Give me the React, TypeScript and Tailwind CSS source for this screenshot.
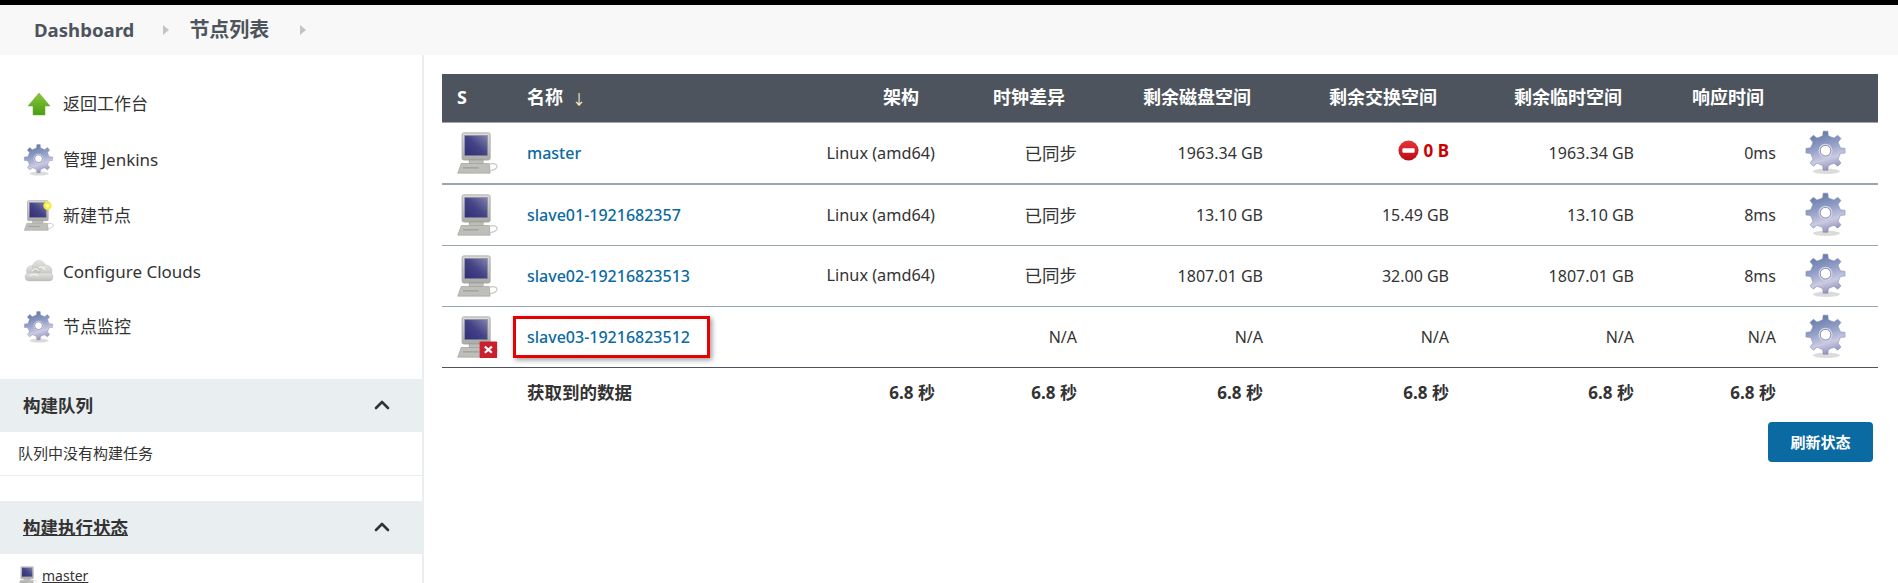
import { ChevronUp } from "lucide-react";

const FONT = {
  fontFamily: '"Noto Sans", "Noto Sans CJK SC", sans-serif',
};

const gearPath = () => {
  const teeth = 8;
  const cx = 24;
  const cy = 24;
  const pts: string[] = [];
  for (let i = 0; i < teeth; i++) {
    const a = (i / teeth) * Math.PI * 2 - Math.PI / 2;
    const step = (Math.PI * 2) / teeth;
    const list: [number, number][] = [
      [a - step * 0.5, 16.5],
      [a - step * 0.24, 17],
      [a - step * 0.15, 22],
      [a + step * 0.15, 22],
      [a + step * 0.24, 17],
    ];
    list.forEach(([t, r]) =>
      pts.push(`${(cx + r * Math.cos(t)).toFixed(2)} ${(cy + r * Math.sin(t)).toFixed(2)}`)
    );
  }
  return `M${pts.join("L")}Z`;
};

const GearIcon = ({ className }: { className: string }) => (
  <svg viewBox="0 0 48 52" className={className}>
    <defs>
      <linearGradient id="gearFill" x1="0.3" y1="0" x2="0.6" y2="1">
        <stop offset="0" stopColor="#5f76a6" />
        <stop offset="0.45" stopColor="#98a4cb" />
        <stop offset="0.72" stopColor="#cbcae2" />
        <stop offset="1" stopColor="#8d8db6" />
      </linearGradient>
    </defs>
    <ellipse cx="25" cy="47" rx="15" ry="3" fill="#000" opacity="0.14" />
    <path
      fillRule="evenodd"
      fill="url(#gearFill)"
      stroke="#8188aa"
      strokeWidth="0.6"
      d={`${gearPath()}M24 18a6 6 0 1 0 0.01 0Z`}
    />
    <circle cx="24" cy="24" r="7" fill="none" stroke="#d6d6e6" strokeWidth="1.6" />
    <circle cx="24" cy="24" r="6" fill="none" stroke="#6a7096" strokeWidth="0.6" />
  </svg>
);

const ComputerIcon = ({
  className,
  offline,
  fresh,
}: {
  className: string;
  offline?: boolean;
  fresh?: boolean;
}) => (
  <svg viewBox="0 0 48 48" className={className}>
    <defs>
      <linearGradient id="screenFill" x1="0" y1="1" x2="1" y2="0">
        <stop offset="0" stopColor="#2f2d78" />
        <stop offset="0.5" stopColor="#444385" />
        <stop offset="0.75" stopColor="#63629a" />
        <stop offset="1" stopColor="#8484ac" />
      </linearGradient>
      <linearGradient id="bodyFill" x1="0" y1="0" x2="0" y2="1">
        <stop offset="0" stopColor="#dcdcda" />
        <stop offset="1" stopColor="#aaaaa6" />
      </linearGradient>
    </defs>
    <rect x="7" y="1" width="32" height="31" rx="2" fill="url(#bodyFill)" stroke="#a2a2a0" />
    <rect x="10" y="4" width="26" height="23" fill="url(#screenFill)" stroke="#85859a" strokeWidth="0.6" />
    <rect x="15" y="32" width="16" height="4" fill="#bdbdb9" stroke="#93938f" strokeWidth="0.6" />
    <path d="M6 36h32l1 11H2z" fill="#bebeba" stroke="#a0a09c" strokeWidth="0.8" />
    <path d="M8 41h18" stroke="#8e8e8a" />
    <path d="M38 37c4 -2 9 0 9 2s-3 5 -8 5" fill="none" stroke="#c8c8c4" strokeWidth="1.4" />
    {offline && (
      <g>
        <rect x="27" y="29" width="20" height="19" rx="1" fill="#cc1f2d" />
        <path d="M33 35l8 7M41 35l-8 7" stroke="#fff" strokeWidth="2.6" />
      </g>
    )}
    {fresh && (
      <g>
        <circle cx="38" cy="9" r="6.5" fill="#f5ee3a" />
        <circle cx="38" cy="9" r="2.6" fill="#fdfdd0" />
      </g>
    )}
  </svg>
);

const UpArrowIcon = () => (
  <svg viewBox="0 0 24 24" className="w-[24px] h-[24px] blur-[0.3px]">
    <defs>
      <linearGradient id="arrowFill" x1="0" y1="0" x2="0" y2="1">
        <stop offset="0" stopColor="#8cc63f" />
        <stop offset="1" stopColor="#4a9e12" />
      </linearGradient>
    </defs>
    <path d="M12 1L23 14H18V23H6V14H1Z" fill="url(#arrowFill)" stroke="#6aa82c" strokeWidth="0.5" />
  </svg>
);

const CloudIcon = () => (
  <svg viewBox="0 0 30 22" className="w-[30px] h-[22px] blur-[0.4px]">
    <defs>
      <linearGradient id="cloudFill" x1="0" y1="0" x2="0" y2="1">
        <stop offset="0" stopColor="#e4e4e2" />
        <stop offset="1" stopColor="#bcbcba" />
      </linearGradient>
    </defs>
    <g fill="url(#cloudFill)" stroke="#c0c0be" strokeWidth="0.5">
      <circle cx="8" cy="11" r="5.5" />
      <circle cx="15" cy="7" r="6.5" />
      <circle cx="22" cy="11" r="6" />
      <rect x="1" y="13" width="28" height="8" rx="4" />
    </g>
    <path d="M8 11c2-3 5-3 7 0M15 8c2-2 5-1 6 2M6 16c3-2 6-2 8 0" fill="none" stroke="#f4f4f2" strokeWidth="1.2" />
  </svg>
);

const sideItems = [
  { label: "返回工作台", icon: <UpArrowIcon /> },
  { label: "管理 Jenkins", icon: <GearIcon className="w-[33px] h-[36px] blur-[0.3px]" /> },
  { label: "新建节点", icon: <ComputerIcon fresh className="w-[31px] h-[31px] blur-[0.3px]" /> },
  { label: "Configure Clouds", icon: <CloudIcon /> },
  { label: "节点监控", icon: <GearIcon className="w-[33px] h-[36px] blur-[0.3px]" /> },
];

const rows = [
  { name: "master", arch: "Linux (amd64)", clock: "已同步", disk: "1963.34 GB", swap: "0 B", tmp: "1963.34 GB", time: "0ms" },
  { name: "slave01-1921682357", arch: "Linux (amd64)", clock: "已同步", disk: "13.10 GB", swap: "15.49 GB", tmp: "13.10 GB", time: "8ms" },
  { name: "slave02-19216823513", arch: "Linux (amd64)", clock: "已同步", disk: "1807.01 GB", swap: "32.00 GB", tmp: "1807.01 GB", time: "8ms" },
  { name: "slave03-19216823512", arch: "", clock: "N/A", disk: "N/A", swap: "N/A", tmp: "N/A", time: "N/A" },
];

const headers = ["架构", "时钟差异", "剩余磁盘空间", "剩余交换空间", "剩余临时空间", "响应时间"];

const rowBorders = [
  "h-[62px] border-b-2 border-[#9ba7af]",
  "h-[61px] border-b border-[#9ba7af]",
  "h-[61px] border-b border-[#9ba7af]",
  "h-[61px] border-b border-[#4d545d]",
];

const BreadcrumbArrow = () => (
  <span className="w-0 h-0 border-y-[5px] border-y-transparent border-l-[6px] border-l-[#c4c4c4]" />
);

export default function App() {
  return (
    <div className="h-[583px] overflow-hidden bg-white text-[#333]" style={FONT}>
      <div className="h-[5px] bg-black" />
      <div className="h-[50px] bg-[#f8f8f8] flex items-center pl-[34px] text-[18.6px] font-bold text-[#4d545d]">
        <span>Dashboard</span>
        <span className="ml-[29px] flex">
          <BreadcrumbArrow />
        </span>
        <span className="ml-[20px] text-[20px]">节点列表</span>
        <span className="ml-[31px] flex">
          <BreadcrumbArrow />
        </span>
      </div>

      <div className="flex">
        {/* Sidebar */}
        <aside className="w-[424px] h-[528px] border-r-2 border-[#e9eef1] shrink-0">
          <div className="pt-[21px] pb-[24px] pl-[23px]">
            {sideItems.map((item) => (
              <div key={item.label} className="h-[55.8px] flex items-center text-[17px]">
                <span className="w-[40px] flex justify-center shrink-0 pr-[9px]">{item.icon}</span>
                <span>{item.label}</span>
              </div>
            ))}
          </div>

          <div className="h-[53px] bg-[#e9eef1] flex items-center justify-between pl-[23px] pr-[28px] font-bold text-[17.5px]">
            <span>构建队列</span>
            <ChevronUp size={24} strokeWidth={2.6} />
          </div>
          <div className="h-[44px] border-b border-[#e9eef1] flex items-center pl-[18px] text-[15px]">
            队列中没有构建任务
          </div>

          <div className="mt-[25px] h-[53px] bg-[#e9eef1] flex items-center justify-between pl-[23px] pr-[28px] font-bold text-[17.5px]">
            <span className="underline">构建执行状态</span>
            <ChevronUp size={24} strokeWidth={2.6} />
          </div>
          <div className="pl-[18px] pt-[11px] flex items-center text-[14px]">
            <ComputerIcon className="w-[19px] h-[19px] shrink-0" />
            <span className="pl-[5px] underline">master</span>
          </div>
        </aside>

        {/* Nodes table */}
        <main className="pl-[18px] pt-[19px]">
          <table className="table-fixed w-[1436px] border-collapse text-[16px]">
            <colgroup>
              <col className="w-[73px]" />
              <col className="w-[285px]" />
              <col className="w-[147px]" />
              <col className="w-[142px]" />
              <col className="w-[186px]" />
              <col className="w-[186px]" />
              <col className="w-[185px]" />
              <col className="w-[142px]" />
              <col className="w-[90px]" />
            </colgroup>
            <thead>
              <tr className="h-[48px] bg-[#4d545d] text-white border-b border-[#9ba7af] text-[18px]">
                <th className="pl-[15px] text-left font-bold">S</th>
                <th className="pl-[12px] text-left font-bold">
                  名称<span className="ml-[9px] font-normal text-[14px] text-[#fff3c4]">↓</span>
                </th>
                {headers.map((h) => (
                  <th key={h} className={h === "架构" ? "pr-[28px] text-right font-bold" : "pr-[24px] text-right font-bold"}>
                    {h}
                  </th>
                ))}
                <th />
              </tr>
            </thead>
            <tbody>
              {rows.map((row, i) => (
                <tr key={row.name} className={rowBorders[i]}>
                  <td className="pl-[14px]">
                    <ComputerIcon offline={row.clock === "N/A"} className="w-[42px] h-[42px] blur-[0.3px]" />
                  </td>
                  <td className="pl-[12px]">
                    <span className="relative inline-block">
                      <a className="font-medium text-[#0b6aa2]">{row.name}</a>
                      {row.clock === "N/A" && (
                        <span className="absolute -left-[14px] -right-[20px] -top-[9px] -bottom-[9px] border-[3px] border-[#e60000] shadow-[2px_2px_5px_rgba(0,0,0,0.4)]" />
                      )}
                    </span>
                  </td>
                  <td className="pr-[12px] text-right text-[16.3px]">{row.arch}</td>
                  <td className={row.clock === "N/A" ? "pr-[12px] text-right" : "pr-[12px] text-right text-[17.5px]"}>
                    {row.clock}
                  </td>
                  <td className="pr-[12px] text-right">{row.disk}</td>
                  <td className="pr-[12px] text-right">
                    {row.swap === "0 B" ? (
                      <span className="inline-flex items-center font-bold text-[#cc0000] text-[17px]">
                        <svg viewBox="0 0 24 24" className="w-[21px] h-[21px] mr-[5px]">
                          <defs>
                            <linearGradient id="stopFill" x1="0" y1="0" x2="0" y2="1">
                              <stop offset="0" stopColor="#e8343a" />
                              <stop offset="1" stopColor="#b80d14" />
                            </linearGradient>
                          </defs>
                          <circle cx="12" cy="12" r="11.5" fill="url(#stopFill)" />
                          <rect x="5" y="9.5" width="14" height="5" rx="1" fill="#fff" />
                        </svg>
                        {row.swap}
                      </span>
                    ) : (
                      row.swap
                    )}
                  </td>
                  <td className="pr-[12px] text-right">{row.tmp}</td>
                  <td className="pr-[12px] text-right">{row.time}</td>
                  <td className="pl-[16px]">
                    <GearIcon className="w-[43px] h-[47px] blur-[0.3px]" />
                  </td>
                </tr>
              ))}
              <tr className="h-[50px] font-bold text-[17px]">
                <td />
                <td className="pl-[12px] text-[17.5px]">获取到的数据</td>
                {[0, 1, 2, 3, 4, 5].map((n) => (
                  <td key={n} className="pr-[12px] text-right">
                    6.8 秒
                  </td>
                ))}
                <td />
              </tr>
            </tbody>
          </table>
          <div className="flex justify-end mt-[5px] pr-[5px]">
            <button className="w-[105px] h-[40px] rounded-[4px] bg-[#0b6aa2] text-white font-bold text-[15px]">
              刷新状态
            </button>
          </div>
        </main>
      </div>
    </div>
  );
}
